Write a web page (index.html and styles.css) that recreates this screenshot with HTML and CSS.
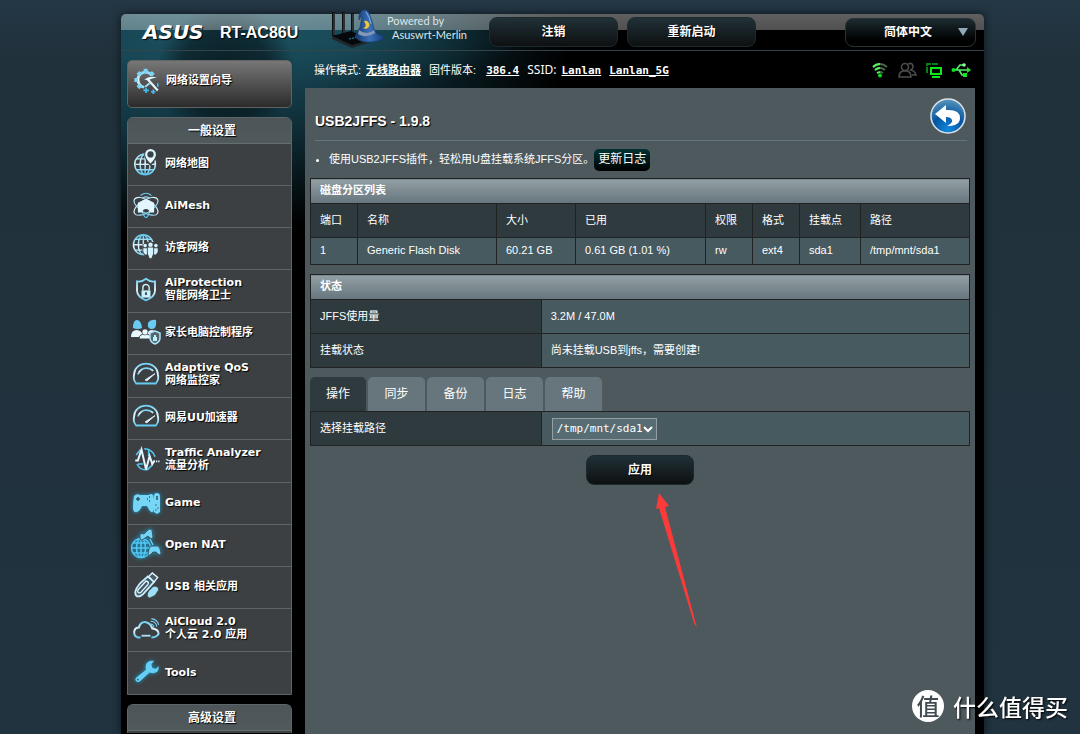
FILE: index.html
```html
<!DOCTYPE html>
<html lang="zh-CN">
<head>
<meta charset="utf-8">
<meta name="viewport" content="width=device-width, initial-scale=1">
<title>RT-AC86U - USB2JFFS</title>
<link rel="stylesheet" href="styles.css">
</head>
<body>
<svg class="defs" aria-hidden="true">
  <defs>
    <linearGradient id="ice" x1="0" y1="0" x2="0" y2="1"><stop offset="0" stop-color="#6fd0f4"/><stop offset=".5" stop-color="#ecf9ff"/><stop offset="1" stop-color="#62c9f0"/></linearGradient>
    <linearGradient id="sky" gradientUnits="userSpaceOnUse" x1="0" y1="2" x2="0" y2="28"><stop offset="0" stop-color="#62c8f0"/><stop offset=".5" stop-color="#e6f7ff"/><stop offset="1" stop-color="#5cc6f0"/></linearGradient>
    <radialGradient id="blueball" cx=".5" cy=".9" r=".9"><stop offset="0" stop-color="#1189e0"/><stop offset=".5" stop-color="#04559f"/><stop offset="1" stop-color="#5d97bd"/></radialGradient>
    <linearGradient id="hat" x1="0" y1="0" x2="1" y2="0"><stop offset="0" stop-color="#12346b"/><stop offset=".5" stop-color="#3b72b8"/><stop offset="1" stop-color="#173c7c"/></linearGradient>
  </defs>
</svg>
<div class="frame">
  <header class="topbar">
    <div class="brand">
      <span class="logo">ASUS</span>
      <span class="model">RT-AC86U</span>
      <svg class="mascot" viewBox="0 0 54 40" aria-hidden="true">
        <path d="M1 3h3v24h-3zM11 3h3v22h-3zM20 4h3v20h-3z" fill="#0b0f12"/>
        <path d="M3 4v22M13 4v20M22 5v19" stroke="#68777e" stroke-width=".7"/>
        <path d="M1 27 20 22 40 31 21 37z" fill="#06090b"/><path d="M1 27v3l20 9v-3zM21 36l19-5v2l-19 6z" fill="#20272b"/>
        <path d="M18 30l9-2" stroke="#1998c9" stroke-dasharray="2 1"/>
        <path d="M24 27q3-4 5-9 1-5 2-11-1 0-3 4-1-7 4-10 4-1 6 3 3 7 5 16l3 5q6 1 7 4-2 3-13 4-13 1-16-6z" fill="url(#hat)" stroke="#143a72" stroke-width=".6"/>
        <path d="M28 21q8 6 15 0l1 3q-9 6-17 1z" fill="#8298b6"/><path d="M33 12a4 4 0 1 1-1 7q5-1 1-7" fill="#f4c83a"/>
        <path d="M35 3q4 5 5 12" stroke="#7eb3e6" fill="none"/>
      </svg>
      <span class="powered">Powered by<span class="firmware">Asuswrt-Merlin</span></span>
    </div>
    <div class="top-actions">
      <button class="pill" type="button">注销</button>
      <button class="pill" type="button">重新启动</button>
    </div>
    <div class="language">
      <select aria-label="语言"><option>简体中文</option></select>
      <svg class="language-arrow" viewBox="0 0 10 8" aria-hidden="true"><path d="M0 0h10L5 8z" fill="#90a9ba"/></svg>
    </div>
  </header>

  <div class="body">
    <nav class="sidebar">
      <a class="wizard" href="#">
        <svg class="icon" viewBox="0 0 30 30"><path d="M20.500 9.500A8.500 8.500 0 1 0 12 22.500" fill="none" stroke="url(#sky)" stroke-width="3"/><path d="M13.500 2v4M5 6l3 3M1 14.500h4M5 23l3-3M22 6l-3 3" stroke="#7ed4f6" stroke-width="4.500"/><path d="M16 14 27 26" stroke="#dff5ff" stroke-width="2.500"/><path d="M12 14q6-5 14-2-6 0-9 3z" fill="#dff5ff"/><path d="M13 22l5-4" stroke="#9edff9" stroke-width="2"/><path d="M14 23v6M11 26h6M22 25v5M19.500 27.500h5M27 18v4" stroke="#43bdf0" stroke-width="1.800"/></svg>
        <span>网络设置向导</span>
      </a>
      <section class="menu">
        <h2 class="menu-title">一般设置</h2>
        <ul class="menu-list">
          <li><a class="item" href="#"><svg class="icon" viewBox="0 0 30 30"><g fill="none" stroke="url(#sky)" stroke-width="1.600"><circle cx="14" cy="17" r="11.500"/><ellipse cx="14" cy="17" rx="5.500" ry="11.500"/><path d="M14.100 6 14 28M3 17.100 25 17M5 11h18M5 23h18"/></g><path d="M20 19q-7-8-7-13a7 7 0 0 1 14 0q0 5-7 13z" fill="#3c4145"/><path d="M20 16q-6-6-6-10a6 6 0 0 1 12 0q0 4-6 10z" fill="#e4f7ff"/><circle cx="20" cy="6" r="3.500" fill="#36424a"/></svg><span>网络地图</span></a></li>
          <li><a class="item" href="#"><svg class="icon" viewBox="0 0 30 30"><g fill="none" stroke="url(#sky)" stroke-width="1.300"><path d="M9 5q6-5 12 0M11 8q4-3 8 0"/><ellipse cx="15" cy="17" rx="15" ry="7" transform="rotate(32 15 17)"/><ellipse cx="15" cy="17" rx="15" ry="7" transform="rotate(-32 15 17)"/><path d="M11 23q4 13 8 0"/></g><path d="M15 9 24 13v11h-5q0-4-4-4t-4 4H6V13z" fill="#e3f6ff"/></svg><span>AiMesh</span></a></li>
          <li><a class="item" href="#"><svg class="icon" viewBox="0 0 30 30"><g fill="none" stroke="url(#sky)" stroke-width="1.600"><circle cx="12" cy="13" r="11"/><ellipse cx="12" cy="13" rx="5.500" ry="11"/><path d="M12.100 2 12 24M1 13.100 23 13M3 7h18M3 19h18"/></g><path d="M11 13l4-3h9l5 3v10l-5 2H14l-3-3z" fill="#3c4145"/><g fill="#d5f2ff"><circle cx="14" cy="14" r="2"/><circle cx="26" cy="14" r="2"/><circle cx="20" cy="13" r="2.500"/><path d="M12 17h4v7h-2l-2-3zM24 17h4v4l-2 3h-2zM17 16h6v7l-2 5h-2l-2-5z"/></g></svg><span>访客网络</span></a></li>
          <li><a class="item tall" href="#"><svg class="icon" viewBox="0 0 30 30"><path d="M15 3q5 4 10 3v10q0 7-10 11Q5 23 5 16V6q5 1 10-3z" fill="none" stroke="url(#ice)" stroke-width="2"/><path d="M11.500 16v-3a3.500 3.500 0 0 1 7 0v3" fill="none" stroke="#c7ecfa" stroke-width="1.600"/><path d="M10 16h10v8H10z" fill="#c8f0ff"/><path d="M15 18v3" stroke="#36424a" stroke-width="2"/></svg><span>AiProtection<br>智能网络卫士</span></a></li>
          <li><a class="item" href="#"><svg class="icon wide" viewBox="0 0 30 30"><path d="M2 11q0-8 4-8t5 8q-4 2-9 0M17 6q3-4 8-3 1 9-4 9t-4-6" fill="#69cdf3"/><path d="M0 20q0-7 6-7 6 1 6 7zM16 19q0-6 5-6 6 1 6 6z" fill="#eaf9ff"/><path d="M8 22q0-5 6-5t6 5z" fill="#eaf9ff" stroke="#3c4145"/><circle cx="14" cy="15" r="3" fill="#eaf9ff" stroke="#3c4145" stroke-width=".6"/><path d="M24 14l5 2v5q0 4-5 6-5-2-5-6v-5z" fill="#55666e" stroke="#a9e4fa" stroke-width="1.500"/><path d="M22 20h4v4h-4zM23 20v-2h2v2" fill="#bdeefa"/></svg><span>家长电脑控制程序</span></a></li>
          <li><a class="item tall" href="#"><svg class="icon" viewBox="0 0 30 30"><g fill="none" stroke="url(#ice)"><path d="M4 25Q0 20 2 14a13 11 0 0 1 26 0q2 6-2 11z" stroke-width="2"/><path d="M6 15q3-7 9-7 5 0 8 3" stroke-width="2"/></g><path d="m14 21 11-7-9 8z" fill="#dff5ff" stroke="#dff5ff"/></svg><span>Adaptive QoS<br>网络监控家</span></a></li>
          <li><a class="item" href="#"><svg class="icon" viewBox="0 0 30 30"><g fill="none" stroke="url(#ice)"><path d="M4 25Q0 20 2 14a13 11 0 0 1 26 0q2 6-2 11z" stroke-width="2"/><path d="M6 15q3-7 9-7 5 0 8 3" stroke-width="2"/></g><path d="m14 21 11-7-9 8z" fill="#dff5ff" stroke="#dff5ff"/></svg><span>网易UU加速器</span></a></li>
          <li><a class="item tall" href="#"><svg class="icon" viewBox="0 0 30 30"><path d="M13 3q9 0 12 9M5 20q4 8 12 6l5-5M18 4v7M6 20h6M4 10l5-6" fill="none" stroke="#58c5ef" stroke-width="1.800"/><path d="M3 16h3l4-12 5 22 4-15 3 9 2-3h1" fill="none" stroke="#e4f7ff" stroke-width="2.200"/><path d="M26 16h1.500v2H26zM28.500 16H30v2h-1.500z" fill="#e4f7ff"/></svg><span>Traffic Analyzer<br>流量分析</span></a></li>
          <li><a class="item" href="#"><svg class="icon wide glow" viewBox="0 0 30 30"><path d="M3 9q3-3 6-1h9q2-2 4 0l1 4v9q0 5-3 4-2-2-4-6h-5q-2 5-5 6-3 1-4-3 0-8 1-13zM26 6q3 0 3 4v15l-3 2-3-2V9q0-3 3-3z" fill="#76d6f7"/><path d="M5 12h4M7 10v4M16 12h1M18 14h1M18 10h1M26 9v4M24.500 18h1M26.500 21h1M24.500 23h1" stroke="#36505c" stroke-width="1.500"/></svg><span>Game</span></a></li>
          <li><a class="item" href="#"><svg class="icon wide glow" viewBox="0 0 30 30"><g fill="none" stroke="#53c8f5" stroke-width="1.500"><circle cx="10" cy="19" r="9.500"/><ellipse cx="10" cy="19" rx="4.500" ry="9.500"/><path d="M10 10v18M1 19h18M3 14h14M3 24h14"/></g><path d="M9 5q2-1 4 0l4-4q2-2 4 0l1 7q-1 3-3 1l-2-2-3 2-3 2q-2 0-2-2zM18 20q1-4 4-3h3q3-1 4 3l1 4q-1 3-3 1l-2-2h-3l-3 3q-2 1-2-1z" fill="#71d5fa" stroke="#3c4145" stroke-width=".8"/><path d="m19 10 3 6" stroke="#71d5fa" stroke-width="1.200"/></svg><span>Open NAT</span></a></li>
          <li><a class="item" href="#"><svg class="icon" viewBox="0 0 30 30"><path d="m8 13 9-8 7 6-10 11q-5 6-9 5-5-4 3-14z" fill="#405968" stroke="#c8eeff" stroke-width="2"/><path d="m18 5 4-4 6 5-4 5z" fill="#4b5d66" stroke="#dbf4ff" stroke-width="1.500"/><path d="m6 20 9-10q4 1 2 4l-8 9q-4 1-3-3z" fill="none" stroke="#e5f8ff" stroke-width="1.500"/><path d="m18 21 5-5q6-1 6 4l-4 6-6 3q-5-2-1-8z" fill="#9ce0f8" stroke="#3c4145" stroke-width=".8"/></svg><span>USB 相关应用</span></a></li>
          <li><a class="item tall" href="#"><svg class="icon" viewBox="0 0 30 30"><path d="M9 25H6q-5-2-4-7 1-4 5-4 2-7 8-6 5 1 7 7 7 1 7 6-2 4-8 4" fill="none" stroke="url(#ice)" stroke-width="2.200"/><path d="M10 23h10" stroke="#afdeee" stroke-width="2"/><path d="M20 7q6 0 7 6M21 4q7 1 8 7M20 10q3 0 4 4" fill="none" stroke="#80d5f5" stroke-width="1.200"/></svg><span>AiCloud 2.0<br>个人云 2.0 应用</span></a></li>
          <li><a class="item" href="#"><svg class="icon glow" viewBox="0 0 30 30"><path d="m4 22 11-9q-2-8 5-10l4 0-3 4 1 4 4 1 3-3q1 8-7 8l-3-1L8 26q-4 2-5-2z" fill="#67cff5"/><circle cx="6" cy="24" r="1" fill="#36505c"/></svg><span>Tools</span></a></li>
        </ul>
      </section>
      <section class="menu">
        <h2 class="menu-title">高级设置</h2>
      </section>
    </nav>

    <main class="main">
      <div class="status">
        <div class="facts">
          <span class="fact">操作模式: <a href="#">无线路由器</a></span>
          <span class="fact">固件版本: <a class="mono firmware-version" href="#">386.4</a></span>
          <span class="fact"><span class="ssid">SSID:</span> <a class="mono" href="#">Lanlan</a></span>
          <a class="mono" href="#">Lanlan_5G</a>
        </div>
        <div class="indicators">
          <svg viewBox="0 0 20 18"><g fill="none" stroke-width="1.800"><path d="M3 6q7-6 14 0M5 9q5-4 10 0M7 12q3-2 6 0" stroke="#4c6a4c"/><path d="M3 6q3-3 7-3M5 9q2-2 5-2M7 12l3-1" stroke="#56f05c"/></g><circle cx="10" cy="14.500" r="2" fill="#09df19"/></svg>
          <svg viewBox="0 0 20 18"><g fill="none" stroke="#4c4c4c" stroke-width="1.600"><circle cx="8" cy="6" r="3.500"/><path d="M2 16q0-5 4-6h4q4 1 4 6zM11 3q4-2 5 2 0 3-2 4 4 1 5 5h-4"/></g></svg>
          <svg viewBox="0 0 20 18"><path d="M3 12V3h10v2" fill="none" stroke="#087f13" stroke-width="2" stroke-dasharray="6 1"/><path d="M7 7h10v6H7zM8 16h8" fill="none" stroke="#0bea1b" stroke-width="2"/></svg>
          <svg viewBox="0 0 20 18"><path d="M1 9h17M5 9l4-5h4M8 9l3 5h3" fill="none" stroke="#52ef68" stroke-width="1.700"/><circle cx="2.500" cy="9" r="2" fill="#0be71c"/><path d="m16 6 4 3-4 3z" fill="#20e52f"/><circle cx="13" cy="4" r="1.800" fill="#8fffa0"/><path d="M12 12h4v4h-4z" fill="#0be71c"/></svg>
        </div>
      </div>

      <div class="panel">
        <div class="heading">
          <h1>USB2JFFS - 1.9.8</h1>
          <button class="back" type="button" aria-label="返回"><svg viewBox="0 0 36 36"><circle cx="18" cy="18" r="17" fill="url(#blueball)" stroke="#dce2e7" stroke-width="1.500"/><path d="M5 16 16 7v5q14-1 14 8 0 8-13 8 6-3 5-6-1-3-6-3v6z" fill="#fff"/></svg></button>
        </div>
        <div class="intro">
          <ul><li>使用USB2JFFS插件，轻松用U盘挂载系统JFFS分区。</li></ul>
          <button class="changelog" type="button">更新日志</button>
        </div>

        <table class="grid disks">
          <colgroup><col class="c-port"><col class="c-name"><col class="c-size"><col class="c-used"><col class="c-port"><col class="c-port"><col class="c-mount"><col></colgroup>
          <thead>
            <tr><th class="band" colspan="8">磁盘分区列表</th></tr>
            <tr><th>端口</th><th>名称</th><th>大小</th><th>已用</th><th>权限</th><th>格式</th><th>挂载点</th><th>路径</th></tr>
          </thead>
          <tbody>
            <tr><td>1</td><td>Generic Flash Disk</td><td>60.21 GB</td><td>0.61 GB (1.01 %)</td><td>rw</td><td>ext4</td><td>sda1</td><td>/tmp/mnt/sda1</td></tr>
          </tbody>
        </table>

        <table class="grid">
          <colgroup><col class="c-label"><col></colgroup>
          <thead><tr><th class="band" colspan="2">状态</th></tr></thead>
          <tbody>
            <tr><th>JFFS使用量</th><td>3.2M / 47.0M</td></tr>
            <tr><th>挂载状态</th><td>尚未挂载USB到jffs，需要创建!</td></tr>
          </tbody>
        </table>

        <div class="tabs" role="tablist">
          <button class="tab active" type="button" role="tab" aria-selected="true">操作</button>
          <button class="tab" type="button" role="tab">同步</button>
          <button class="tab" type="button" role="tab">备份</button>
          <button class="tab" type="button" role="tab">日志</button>
          <button class="tab" type="button" role="tab">帮助</button>
        </div>
        <table class="grid form">
          <colgroup><col class="c-label"><col></colgroup>
          <tbody>
            <tr>
              <th><label for="mount-path">选择挂载路径</label></th>
              <td><div class="path"><select id="mount-path"><option>/tmp/mnt/sda1</option></select><svg viewBox="0 0 10 8" aria-hidden="true"><path d="m1 2 4 4 4-4" fill="none" stroke="#fff" stroke-width="2"/></svg></div></td>
            </tr>
          </tbody>
        </table>
        <div class="submit">
          <button class="pill apply" type="button">应用</button>
          <svg class="pointer" viewBox="0 0 42 136" aria-hidden="true"><path d="M3 0 13 13 9 14 41 135 38 130 3 15 0 16z" fill="#fc3a3a"/></svg>
        </div>
      </div>
    </main>
  </div>
</div>
<div class="watermark"><span class="seal">值</span><span>什么值得买</span></div>
</body>
</html>
```
FILE: styles.css
```css
* { box-sizing: border-box; }

body {
  margin: 0;
  min-height: 100vh;
  padding: 14px 0 0 25px;
  background: linear-gradient(#243745, #20313b 60px, #21333f);
  color: #fff;
  font: 11px/13px "Liberation Sans", "Noto Sans CJK SC", sans-serif;
}

button, select { font: inherit; color: inherit; }
a { color: inherit; }
h1, h2, ul { margin: 0; padding: 0; }
.defs { position: absolute; width: 0; height: 0; }

.frame {
  max-width: 863px;
  min-height: calc(100vh - 14px);
  margin: 0 auto;
  border-radius: 5px 5px 0 0;
  background:
    radial-gradient(circle at 105px 60px, #071419cc 0, #07141999 45px, transparent 70px),
    radial-gradient(ellipse 230px 60px at 170px 20px, #1b4f5e, transparent),
    radial-gradient(ellipse 390px 200px at 60px 20px, #1a4d5c, #123743 45%, transparent),
    #000;
  box-shadow: 0 0 8px #0b151c;
}

.topbar {
  display: flex;
  align-items: center;
  height: 37px;
  padding-right: 8px;
  border-bottom: 1px solid #35444b;
  border-radius: 5px 5px 0 0;
  background: linear-gradient(#ffffff60, #ffffff50 16px, transparent 16px);
}
.brand { display: flex; flex: 0 0 368px; align-items: center; padding-left: 22px; }
.logo { flex: 0 0 77px; font: italic bold 20px/24px "DejaVu Sans", sans-serif; text-shadow: 1px 1px 1px #000; }
.model { flex: 0 0 111px; font-size: 16px; font-weight: bold; text-shadow: 1px 1px 1px #000; }
.mascot { width: 54px; height: 40px; flex: none; margin-top: -6px; }
.powered { padding-left: 2px; font: 11px/14px Lato, sans-serif; margin-top: -9px; white-space: nowrap; color: #dde5e8; }
.firmware { display: block; padding-left: 5px; }
.top-actions { display: flex; gap: 9px; }
.pill {
  width: 129px;
  height: 30px;
  border: 1px solid #1d2a2d;
  border-radius: 8px;
  background: linear-gradient(#203137, #0e1011);
  font-size: 12px;
  font-weight: bold;
  text-shadow: 1px 1px 1px #000;
}
.language { position: relative; margin-left: auto; }
.language select {
  width: 131px;
  height: 29px;
  padding: 0 5px 0 0;
  appearance: none;
  border: 1px solid #293235;
  border-radius: 8px;
  background: linear-gradient(#1c2c31, #000 80%);
  font-size: 12px;
  font-weight: bold;
  text-align: center;
  text-align-last: center;
}
.language-arrow { position: absolute; right: 8px; top: 10px; width: 10px; height: 8px; pointer-events: none; }

.body { display: flex; gap: 13px; padding: 0 9px 0 6px; }
.sidebar {
  flex: 0 0 165px;
  padding-top: 9px;
  font-family: "DejaVu Sans", "Noto Sans CJK SC", sans-serif;
  font-weight: bold;
  text-shadow: 1px 1px 1px #000;
}
.wizard, .item { display: flex; align-items: center; gap: 4px; text-decoration: none; white-space: nowrap; }
.wizard {
  height: 48px;
  padding: 0 4px 8px;
  border: 1px solid #626262;
  border-radius: 5px;
  background: linear-gradient(#777, #2b2b2b);
}
.icon { width: 30px; height: 27px; flex: none; }
.icon.wide { height: 30px; }
.glow { filter: drop-shadow(0 0 2px #159bd0); }
.menu { margin-top: 9px; border: 1px solid #5c6669; border-radius: 6px 6px 0 0; background: #3c4042; }
.menu:last-child { padding-bottom: 2px; border-bottom: 0; }
.menu-title {
  height: 26px;
  padding-left: 5px;
  border-bottom: 1px solid #656f72;
  border-radius: 5px 5px 0 0;
  background: linear-gradient(#4d5558, #50595c);
  font-size: 12px;
  line-height: 26px;
  text-align: center;
}
.menu-list { list-style: none; }
.item { height: 42px; padding: 0 4px 4px 3px; border-bottom: 1px solid #5c6669; }
.item.tall { height: 43px; }
.item span { padding-top: 2px; }
.item.tall span { padding-top: 0; }
li:last-child > .item { border-bottom: 0; }

.main { display: flex; flex: 1; flex-direction: column; min-width: 0; }
.status { display: flex; align-items: center; justify-content: space-between; height: 37px; padding: 0 4px 0 9px; }
.facts { display: flex; align-items: baseline; gap: 8px; white-space: nowrap; }
.fact { display: flex; align-items: baseline; gap: 5px; }
.facts a { font-weight: bold; }
.facts .mono { font-family: "DejaVu Sans Mono", monospace; }
.facts .firmware-version { margin-left: 5px; }
.ssid { font: 12px/13px "Noto Sans", sans-serif; }
.indicators { display: flex; gap: 7px; }
.indicators svg { width: 20px; height: 18px; }

.panel { flex: 1; min-height: 646px; padding: 0 5px; background: #4d595d; }
.heading {
  display: flex;
  align-items: center;
  justify-content: space-between;
  height: 53px;
  margin: 0 3px 0 5px;
  padding-top: 8px;
  border-bottom: 1px solid #63747b;
}
.heading h1 { padding-top: 6px; font-size: 14px; text-shadow: 1px 1px 1px #000; }
.back { width: 36px; height: 36px; margin: 0 1px 4px 0; padding: 0; border: 0; background: none; }
.back svg { display: block; }
.intro { display: flex; align-items: center; height: 37px; padding-left: 19px; }
.changelog { height: 22px; padding: 0 4px; border: 0; border-radius: 5px; background: linear-gradient(#003333, #000); font-size: 12px; }

.grid { width: 100%; margin-bottom: 9px; border-collapse: collapse; table-layout: fixed; }
.grid th, .grid td { height: 34px; padding: 0 9px 1px; border: 1px solid #222; text-align: left; white-space: nowrap; }
.grid th { background: #2f3a3e; font-weight: normal; }
.grid td { background: #475a5f; }
.grid .band { height: 25px; background: linear-gradient(#92a0a5, #66757c); font-weight: bold; }
.grid.disks td { height: 27px; }
.grid.form td { padding: 0 10px; }
.c-port { width: 47px; }
.c-name { width: 139px; }
.c-size { width: 79px; }
.c-used { width: 130px; }
.c-mount { width: 61px; }
.c-label { width: 35%; }

.tabs { display: flex; gap: 2px; }
.tab { width: 57px; height: 34px; padding: 0; border: 0; border-radius: 5px 5px 0 0; background: #67767d; font-size: 12px; }
.tab.active { width: 56px; background: #2f3a3e; }
.path { position: relative; width: 105px; }
.path select {
  display: block;
  width: 105px;
  height: 22px;
  padding: 0 4px;
  appearance: none;
  border: 1px solid #929ea1;
  border-radius: 0;
  background: #576d73;
  font-family: "DejaVu Sans Mono", monospace;
}
.path svg { position: absolute; right: 4px; top: 7px; width: 10px; height: 8px; pointer-events: none; }
.submit { position: relative; text-align: center; }
.apply { width: 108px; }
.pointer { position: absolute; left: 50%; top: 38px; width: 42px; height: 136px; margin-left: 16px; }

.watermark {
  position: fixed;
  right: 12px;
  bottom: 11px;
  display: flex;
  align-items: center;
  gap: 9px;
  font: 500 23px/34px "Noto Sans CJK SC", sans-serif;
  text-shadow: 1px 1px 2px #000;
}
.seal { width: 32px; height: 32px; border-radius: 50%; background: #fff; color: #3f4b50; font-size: 23px; line-height: 31px; text-align: center; text-shadow: none; }
```
